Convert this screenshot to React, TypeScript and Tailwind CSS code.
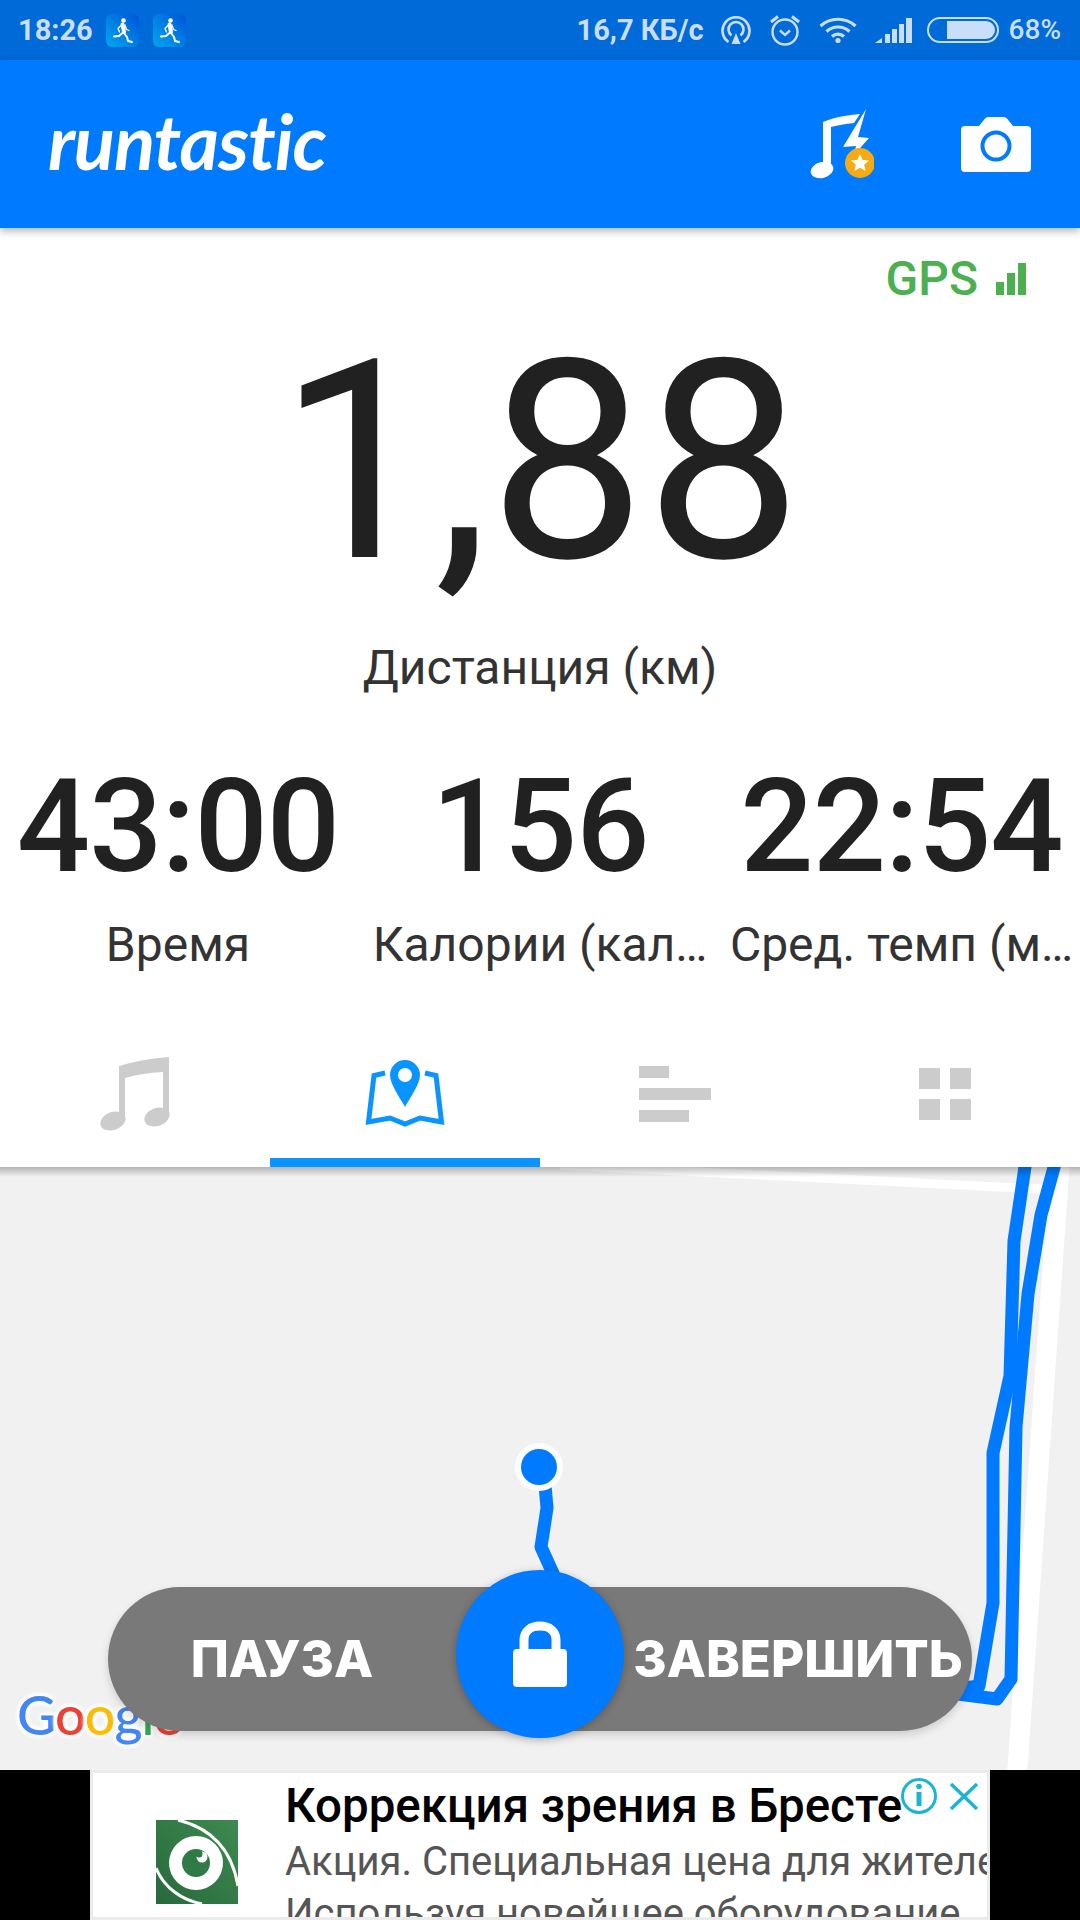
import React from "react";

const Runner = () => (
  <div className="w-[33px] h-[33px] rounded-[6px] bg-gradient-to-tr from-[#00a8f0] to-[#0050d8] flex items-center justify-center">
    <svg width="33" height="33" viewBox="0 0 33 33" fill="none" stroke="#fff" strokeLinecap="round" strokeLinejoin="round">
      <circle cx="17.5" cy="6.5" r="2.3" fill="#fff" stroke="none" />
      <path d="M16.5 10.5 L18 18" strokeWidth="4" />
      <path d="M15.5 11 L12 14.5 L13.5 18" strokeWidth="1.3" />
      <path d="M19 11 L20.5 15.5 L23 16.5" strokeWidth="1.3" />
      <path d="M16.5 19 L13 22 L8 22.5" strokeWidth="2" />
      <path d="M18 19 L21 23 L22 27 L26 28" strokeWidth="2" />
    </svg>
  </div>
);

const Hotspot = () => (
  <svg width="30" height="30" viewBox="0 0 30 30" fill="none" stroke="#c9defa" strokeWidth="2.6">
    <path d="M7.5 27 A13.5 13.5 0 1 1 22.5 27" />
    <path d="M10.5 20.5 A7.5 7.5 0 1 1 19.5 20.5" />
    <path d="M15 18 L19.5 29 L10.5 29 Z" fill="#c9defa" stroke="none" />
  </svg>
);

const Alarm = () => (
  <svg width="32" height="32" viewBox="0 0 32 32" fill="none" stroke="#c9defa" strokeWidth="2.4">
    <circle cx="16" cy="18" r="12.5" />
    <path d="M11 16.5 L16 21 L21 16.5" />
    <path d="M2 8 L9 2.5 M30 8 L23 2.5" strokeWidth="3" />
  </svg>
);

const Wifi = () => (
  <svg width="38" height="26" viewBox="0 0 38 26" fill="none" stroke="#c9defa" strokeWidth="3.2">
    <path d="M1.5 9 A26 26 0 0 1 36.5 9" />
    <path d="M7.5 14.5 A17 17 0 0 1 30.5 14.5" />
    <path d="M13 19.5 A9 9 0 0 1 25 19.5" />
    <circle cx="19" cy="23.5" r="2.6" fill="#c9defa" stroke="none" />
  </svg>
);

const Signal = () => (
  <svg width="37" height="25" viewBox="0 0 37 25" fill="#c9defa">
    <path d="M0 25 L7 20 L7 25 Z" />
    <rect x="10" y="16" width="5" height="9" />
    <rect x="17" y="11" width="5" height="14" />
    <rect x="24" y="6" width="5" height="19" />
    <rect x="31" y="0" width="6" height="25" />
  </svg>
);

const Battery = () => (
  <div className="w-[72px] h-[26px] rounded-[13px] border-2 border-[#c9defa] p-[2px] flex justify-end">
    <div className="w-[48px] h-full rounded-r-[9px] bg-[#c9defa]" />
  </div>
);

const MusicFlash = () => (
  <svg width="64" height="70" viewBox="0 0 64 70">
    <path d="M13 13 C25 8 38 6 50 5 L44 14 C35 15 28 16 21 18 L21 60 L13 60 Z" fill="#fff" />
    <ellipse cx="12" cy="61" rx="11.5" ry="8" transform="rotate(-15 12 61)" fill="#fff" />
    <path d="M56 0 L33 38 L46 37 L44 46 L59 29 L48 28 Z" fill="#fff" />
    <circle cx="50" cy="54" r="15" fill="#f5ab13" />
    <path d="M50 45 L52.6 51 L59 51.6 L54.2 55.8 L55.7 62 L50 58.8 L44.3 62 L45.8 55.8 L41 51.6 L47.4 51 Z" fill="#fff" />
  </svg>
);

const Camera = () => (
  <svg width="70" height="55" viewBox="0 0 70 55">
    <path d="M4 9 H18 L24 1.5 Q25.2 0 27 0 H43 Q44.8 0 46 1.5 L52 9 H66 Q70 9 70 13 V51 Q70 55 66 55 H4 Q0 55 0 51 V13 Q0 9 4 9 Z" fill="#fff" />
    <circle cx="35" cy="29" r="13.5" fill="#fff" stroke="#007aff" strokeWidth="4" />
  </svg>
);

const MusicTab = () => (
  <svg width="70" height="74" viewBox="0 0 70 74" fill="#cccccc">
    <path d="M19 9 Q42 2 69 0 L69 60 L63 60 L63 15 Q42 16 25 21 L25 64 L19 64 Z" />
    <ellipse cx="13" cy="64" rx="13" ry="9" transform="rotate(-20 13 64)" />
    <ellipse cx="57" cy="60" rx="13" ry="9" transform="rotate(-20 57 60)" />
  </svg>
);

const MapTab = () => (
  <svg width="80" height="68" viewBox="0 0 80 68" fill="none">
    <path d="M20 13 L9 15.5 L3.5 62 L25 58 L40 64 L55 58 L76.5 62 L71 15.5 L60 13" stroke="#0a94ff" strokeWidth="5" />
    <path fillRule="evenodd" d="M40 0 A15 15 0 0 1 55 15 C55 24 46 36 40 47 C34 36 25 24 25 15 A15 15 0 0 1 40 0 Z M40 8 A7 7 0 1 0 40 22 A7 7 0 1 0 40 8 Z" fill="#0a94ff" />
  </svg>
);

const Lock = () => (
  <svg width="54" height="66" viewBox="0 0 54 66" fill="#fff">
    <path d="M4 28 H50 Q54 28 54 32 V62 Q54 66 50 66 H4 Q0 66 0 62 V32 Q0 28 4 28 Z" />
    <path d="M11 30 V19 C11 10 18 5 27 5 C36 5 43 10 43 19 V30" fill="none" stroke="#fff" strokeWidth="9" />
  </svg>
);

const AdLogo = () => (
  <svg width="82" height="84" viewBox="0 0 82 84">
    <defs>
      <linearGradient id="g" x1="1" y1="0" x2="0" y2="1">
        <stop offset="0" stopColor="#3d8a50" />
        <stop offset="1" stopColor="#28693c" />
      </linearGradient>
    </defs>
    <rect width="82" height="84" fill="url(#g)" />
    <path d="M22 0 C55 8 76 30 82 66 M0 48 C8 68 26 80 46 84" stroke="#fff" strokeWidth="3" fill="none" />
    <circle cx="40" cy="43" r="27" fill="#fff" />
    <circle cx="40" cy="43" r="14" fill="#2f7a46" />
    <circle cx="46" cy="37" r="5.5" fill="#fff" />
    <circle cx="43" cy="34" r="3.5" fill="#2f7a46" />
  </svg>
);

const GoogleMark = () => (
  <div className="absolute left-[17px] top-[516px] font-['Lato',sans-serif] font-medium text-[54px] leading-[64px] tracking-[-1px] [text-shadow:0_0_6px_#fff,0_0_6px_#fff,0_0_6px_#fff,0_0_6px_#fff,0_0_6px_#fff]">
    <span className="text-[#4285f4]">G</span>
    <span className="text-[#ea4335]">o</span>
    <span className="text-[#fbbc05]">o</span>
    <span className="text-[#4285f4]">g</span>
    <span className="text-[#34a853]">l</span>
    <span className="text-[#ea4335]">e</span>
  </div>
);

const Stat = ({ value, label, className }: { value: string; label: string; className?: string }) => (
  <div className={`flex flex-col items-center ${className ?? ""}`}>
    <div className="text-[129px] leading-[130px] font-medium text-[#212121] tracking-[-1px]">{value}</div>
    <div className="mt-[25px] text-[48px] leading-[56px] text-[#333333] whitespace-nowrap">{label}</div>
  </div>
);

const Tab = ({ active, children }: { active?: boolean; children: React.ReactNode }) => (
  <div className={`flex-1 flex items-center justify-center border-b-[9px] ${active ? "border-[#0a94ff]" : "border-transparent"}`}>
    {children}
  </div>
);

export default function App() {
  return (
    <div className="w-[1080px] h-[1920px] flex flex-col overflow-hidden bg-white font-['Roboto',sans-serif]">
      {/* Status bar */}
      <div className="h-[60px] bg-[#006ad8] flex items-center pl-[18px] pr-[19px] text-[#c9defa] text-[29px] font-bold leading-none">
        <span className="w-[88px]">18:26</span>
        <div className="flex gap-[14px]">
          <Runner />
          <Runner />
        </div>
        <div className="ml-auto flex items-center">
          <span className="mr-[17px]">16,7 КБ/с</span>
          <div className="mr-[18px]"><Hotspot /></div>
          <div className="mr-[18px]"><Alarm /></div>
          <div className="mr-[18px]"><Wifi /></div>
          <div className="mr-[15px]"><Signal /></div>
          <div className="mr-[10px]"><Battery /></div>
          <span className="text-[28px] font-medium">68%</span>
        </div>
      </div>

      {/* Header */}
      <div className="relative z-20 h-[168px] bg-[#007aff] flex items-center pl-[48px] pr-[49px] shadow-[0_3px_8px_rgba(0,0,0,0.3)]">
        <span className="font-['Lato',sans-serif] italic font-bold text-white text-[76px] leading-none tracking-[-1px] -mt-[6px]">runtastic</span>
        <div className="ml-auto mr-[87px]"><MusicFlash /></div>
        <div className="mt-[1px]"><Camera /></div>
      </div>

      {/* Stats */}
      <div className="h-[939px] shrink-0 bg-white flex flex-col">
        <div className="flex items-center justify-end h-[38px] mt-[32px] pr-[54px]">
          <span className="text-[#4caf50] text-[48px] leading-none font-medium">GPS</span>
          <div className="flex items-end gap-[3px] ml-[18px] h-[32px]">
            <div className="w-[8px] h-[13px] bg-[#4caf50]" />
            <div className="w-[8px] h-[22px] bg-[#4caf50]" />
            <div className="w-[8px] h-[32px] bg-[#4caf50]" />
          </div>
        </div>
        <div className="text-center text-[278px] leading-[284px] text-[#212121] mt-[22px]">1,88</div>
        <div className="text-center text-[48px] leading-[56px] text-[#333333] mt-[36px]">Дистанция (км)</div>
        <div className="grid grid-cols-3 mt-[66px]">
          <Stat value="43:00" label="Время" className="pr-[4px]" />
          <Stat value="156" label="Калории (кал…" />
          <Stat value="22:54" label="Сред. темп (м…" className="pl-[3px]" />
        </div>
        <div className="flex h-[137px] mt-auto">
          <Tab><MusicTab /></Tab>
          <Tab active><MapTab /></Tab>
          <Tab>
            <div className="flex flex-col gap-[10px] w-[72px]">
              <div className="h-[12px] w-[30px] bg-[#cccccc]" />
              <div className="h-[12px] w-[72px] bg-[#cccccc]" />
              <div className="h-[12px] w-[50px] bg-[#cccccc]" />
            </div>
          </Tab>
          <Tab>
            <div className="grid grid-cols-2 gap-[10px]">
              <div className="w-[21px] h-[21px] bg-[#cccccc]" />
              <div className="w-[21px] h-[21px] bg-[#cccccc]" />
              <div className="w-[21px] h-[21px] bg-[#cccccc]" />
              <div className="w-[21px] h-[21px] bg-[#cccccc]" />
            </div>
          </Tab>
        </div>
      </div>

      {/* Map */}
      <div className="relative flex-1 bg-[#f1f1f1] overflow-hidden">
        <div className="absolute z-10 left-0 right-0 top-0 h-[10px] bg-gradient-to-b from-black/25 to-transparent" />
        <svg className="absolute inset-0" width="1080" height="603" viewBox="0 1167 1080 603" fill="none">
          <path d="M560 1165 L1060 1190" stroke="#fff" strokeWidth="9" />
          <path d="M1060 1160 L1017 1775" stroke="#fff" strokeWidth="20" />
          <g stroke="#007aff" strokeWidth="13" strokeLinejoin="round">
            <path d="M1026 1160 L1014 1241 L1010 1376 L993 1453 L993 1603 L979 1686 L950 1690" />
            <path d="M1056 1160 L1041 1215 L1028 1294 L1016 1427 L1011 1679 L997 1699 L950 1693" />
            <path d="M545 1485 L547 1508 L541 1547 L556 1580" />
          </g>
          <circle cx="539" cy="1467" r="24" fill="#fff" />
          <circle cx="539" cy="1467" r="18" fill="#007aff" />
        </svg>
        <GoogleMark />
        <div className="absolute left-[108px] top-[420px] w-[864px] h-[144px] rounded-[72px] bg-[#797979] shadow-[0_4px_8px_rgba(0,0,0,0.15)] grid grid-cols-[1fr_168px_1fr] grid-rows-[144px] items-center font-['Inter',sans-serif] font-extrabold text-white text-[51px]">
          <span className="text-center">ПАУЗА</span>
          <div className="relative -top-[5px] w-[168px] h-[168px] rounded-full bg-[#007aff] shadow-[0_2px_8px_rgba(0,0,0,0.25)] flex items-center justify-center">
            <Lock />
          </div>
          <span className="text-center whitespace-nowrap">ЗАВЕРШИТЬ</span>
        </div>
      </div>

      {/* Ad */}
      <div className="h-[150px] bg-black flex justify-center">
        <div className="relative w-[900px] h-full bg-[#ebebeb] pt-[3px] px-[3px] pb-[3px]">
          <div className="relative h-full bg-white overflow-hidden flex">
            <div className="w-[63px] shrink-0" />
            <div className="mt-[47px] shrink-0"><AdLogo /></div>
            <div className="ml-[47px] whitespace-nowrap">
              <div className="text-[47.5px] leading-[54px] font-medium text-black mt-[6px]">Коррекция зрения в Бресте</div>
              <div className="text-[40px] leading-[48px] text-[#555555] mt-[5px]">Акция. Специальная цена для жителей</div>
              <div className="text-[40px] leading-[48px] text-[#555555] mt-[4px]">Используя новейшее оборудование</div>
            </div>
          </div>
          <svg className="absolute left-[809px] top-[5px]" width="82" height="42" viewBox="0 0 82 42" fill="none" stroke="#1bb4d2">
            <circle cx="20" cy="21" r="16.5" strokeWidth="3" />
            <path d="M20 17 V31" strokeWidth="5" />
            <circle cx="20" cy="11.5" r="2.8" fill="#1bb4d2" stroke="none" />
            <path d="M52 9 L78 34 M78 9 L52 34" strokeWidth="3.5" />
          </svg>
        </div>
      </div>
    </div>
  );
}
